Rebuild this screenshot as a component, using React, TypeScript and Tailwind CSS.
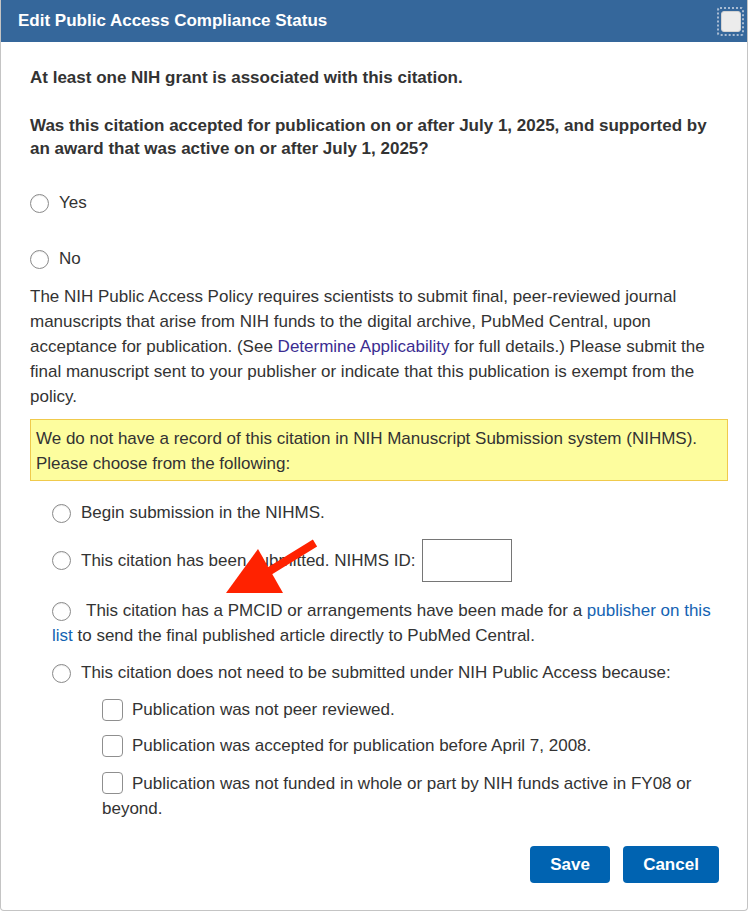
import React from "react";

function Radio() {
  return (
    <span className="inline-block w-[19px] h-[19px] rounded-full border border-[#8a8a8a] bg-white shadow-[inset_0_1px_1px_rgba(0,0,0,0.08)] shrink-0 align-middle" />
  );
}

function Checkbox() {
  return (
    <span className="inline-block w-[21px] h-[22px] rounded-[4px] border border-[#8f8f8f] bg-white shrink-0" />
  );
}

export default function App() {
  return (
    <div
      className="relative w-[748px] h-[913px] bg-white text-[#333] text-[17px]"
      style={{ fontFamily: '"Liberation Sans", Arial, Helvetica, sans-serif' }}
    >
      <div className="h-[911px] border-x border-b border-[#c4c4c4] rounded-b-[4px] flex flex-col">
        {/* Header */}
        <div className="h-[42px] bg-[#35679b] flex items-center justify-between pl-[17px] pr-[3px]">
          <span className="text-white font-bold text-[17px]">Edit Public Access Compliance Status</span>
          <span className="w-[27px] h-[29px] border-2 border-dotted border-[#a9bcd3] rounded-[3px] flex items-center justify-center">
            <span className="w-[20px] h-[21px] rounded-[3px] bg-[#ececec] border border-[#d2d2d2]" />
          </span>
        </div>

        {/* Content */}
        <div className="pl-[29px] pr-[19px] flex flex-col">
          <p className="mt-[24px] font-bold leading-[23px]">At least one NIH grant is associated with this citation.</p>
          <p className="mt-[25px] font-bold leading-[23px]">
            Was this citation accepted for publication on or after July 1, 2025, and supported by an award that was active on or after July 1, 2025?
          </p>

          <div className="mt-[31px] h-[24px] flex items-center gap-[10px]">
            <Radio />
            <span>Yes</span>
          </div>
          <div className="mt-[32px] h-[24px] flex items-center gap-[10px]">
            <Radio />
            <span>No</span>
          </div>

          <p className="mt-[13px] leading-[25px]">
            The NIH Public Access Policy requires scientists to submit final, peer-reviewed journal manuscripts that arise from NIH funds to the digital archive, PubMed Central, upon acceptance for publication. (See{" "}
            <span className="text-[#3b2c91]">Determine Applicability</span> for full details.) Please submit the final manuscript sent to your publisher or indicate that this publication is exempt from the policy.
          </p>

          <div className="mt-[10px] border border-[#f0ca4c] bg-[#fdfd9e] pl-[5px] pt-[6px] pb-[4px] leading-[25px]">
            We do not have a record of this citation in NIH Manuscript Submission system (NIHMS). Please choose from the following:
          </div>

          <div className="pl-[22px] flex flex-col">
            <div className="mt-[20px] h-[24px] flex items-center gap-[10px]">
              <Radio />
              <span>Begin submission in the NIHMS.</span>
            </div>
            <div className="mt-[14px] h-[43px] flex items-center gap-[10px]">
              <Radio />
              <span>This citation has been submitted. NIHMS ID:</span>
              <span className="-ml-[3px] w-[90px] h-[43px] border border-[#767676] bg-white" />
            </div>
            <p className="mt-[16px] leading-[25px]">
              <Radio />
              <span className="ml-[15px]">
                This citation has a PMCID or arrangements have been made for a{" "}
                <span className="text-[#1463b3]">publisher on this list</span> to send the final published article directly to PubMed Central.
              </span>
            </p>
            <div className="mt-[13px] h-[24px] flex items-center gap-[10px]">
              <Radio />
              <span>This citation does not need to be submitted under NIH Public Access because:</span>
            </div>

            <div className="pl-[50px] flex flex-col">
              <div className="mt-[13px] h-[24px] flex items-center gap-[9px]">
                <Checkbox />
                <span>Publication was not peer reviewed.</span>
              </div>
              <div className="mt-[12px] h-[24px] flex items-center gap-[9px]">
                <Checkbox />
                <span>Publication was accepted for publication before April 7, 2008.</span>
              </div>
              <p className="mt-[13px] leading-[25px]">
                <span className="relative inline-block w-[21px] h-[12px] align-[-1px]">
                  <span className="absolute left-0 top-[-6px] flex">
                    <Checkbox />
                  </span>
                </span>
                <span className="ml-[9px]">
                  Publication was not funded in whole or part by NIH funds active in FY08 or beyond.
                </span>
              </p>
            </div>
          </div>

          <div className="mt-[25px] flex justify-end gap-[13px] mr-[9px]">
            <button className="w-[80px] h-[37px] rounded-[4px] bg-[#0063b1] text-white font-bold text-[17px]">Save</button>
            <button className="w-[96px] h-[37px] rounded-[4px] bg-[#0063b1] text-white font-bold text-[17px]">Cancel</button>
          </div>
        </div>
      </div>

      {/* Red annotation arrow */}
      <svg className="absolute left-0 top-0 pointer-events-none" width="748" height="913" viewBox="0 0 748 913">
        <line x1="315" y1="543" x2="268" y2="572" stroke="#ff2200" strokeWidth="8" />
        <polygon points="258,549 283,593 226,593" fill="#ff2200" />
      </svg>
    </div>
  );
}
